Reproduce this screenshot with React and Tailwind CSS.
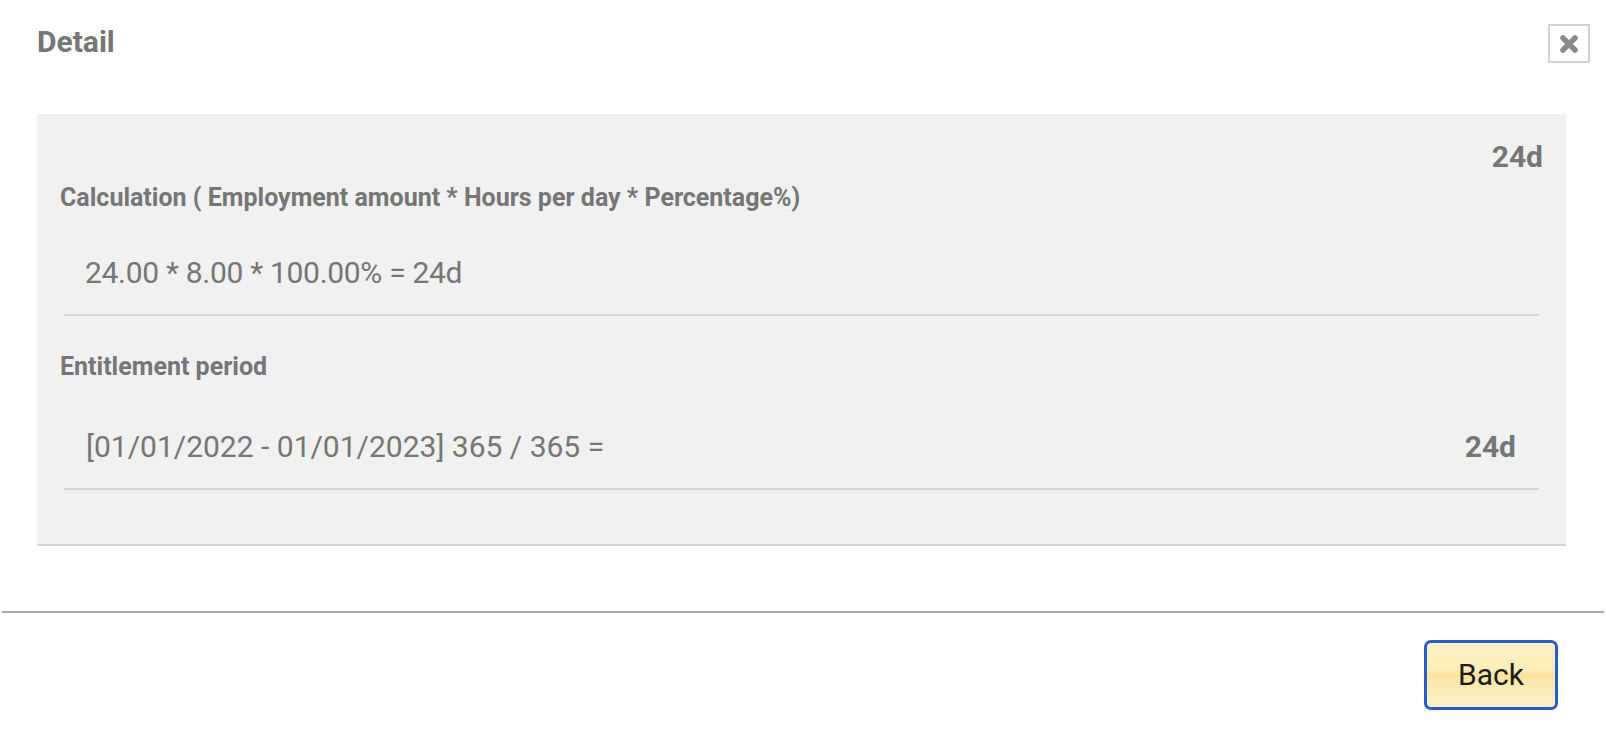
import React from "react";

export default function App() {
  return (
    <div className="w-[1606px] h-[744px] bg-white flex flex-col font-['Roboto',sans-serif] text-[#767676]">
      {/* header */}
      <div className="flex items-start justify-between pt-[24px] pl-[37px] pr-[16px]">
        <div className="text-[30px] leading-[36px] font-bold">Detail</div>
        <div className="w-[42px] h-[39px] border-2 border-[#d2d2d2] flex items-center justify-center">
          <svg width="20" height="20" viewBox="0 0 20 20">
            <path d="M4 4 L16 16 M16 4 L4 16" stroke="#8a8a8a" strokeWidth="5.5" strokeLinecap="round" />
          </svg>
        </div>
      </div>

      {/* panel */}
      <div className="mt-[51px] ml-[37px] mr-[40px] bg-[#f1f1f1] border-b-2 border-[#d3d3d3] pt-[25px] pb-[54px]">
        <div className="flex justify-end pr-[23px]">
          <div className="text-[30px] leading-[36px] font-bold">24d</div>
        </div>

        <div className="mt-[8px] pl-[23px] text-[25px] leading-[30px] font-bold">
          Calculation ( Employment amount * Hours per day * Percentage%)
        </div>
        <div className="mx-[27px] mt-[42px] border-b-2 border-[#d5d5d5] pb-[23px]">
          <div className="pl-[21px] text-[30px] leading-[36px] tracking-[-0.3px]">24.00 * 8.00 * 100.00% = 24d</div>
        </div>

        <div className="mt-[36px] pl-[23px] text-[25px] leading-[30px] font-bold">Entitlement period</div>
        <div className="mx-[27px] mt-[47px] border-b-2 border-[#d5d5d5] pb-[23px]">
          <div className="flex items-start justify-between pl-[22px] pr-[23px]">
            <div className="text-[30px] leading-[36px]">[01/01/2022 - 01/01/2023] 365 / 365 =</div>
            <div className="text-[30px] leading-[36px] font-bold">24d</div>
          </div>
        </div>
      </div>

      {/* footer */}
      <div className="mt-[65px] mx-[2px] h-[2px] bg-[#ababab]" />
      <div className="flex justify-end pr-[48px] pt-[27px]">
        <button className="w-[134px] h-[70px] rounded-[7px] border-[3px] border-[#2a5bc6] bg-[linear-gradient(to_bottom,#fdf0c3_0%,#fcedb9_42%,#f9e29b_50%,#fbe8ae_60%,#fdf1c9_100%)] text-[30px] leading-[36px] text-[#1c1c1c] flex items-center justify-center">
          Back
        </button>
      </div>
    </div>
  );
}
